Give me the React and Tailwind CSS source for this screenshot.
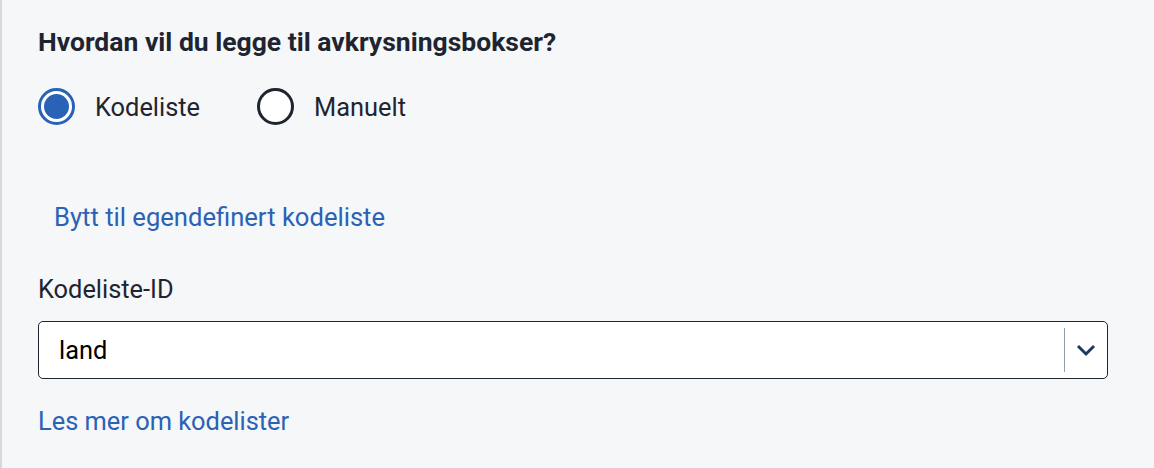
import { useState } from 'react'

function Radio({ checked, label, onClick }) {
  return (
    <label className="flex items-center gap-[20px] cursor-pointer" onClick={onClick}>
      {checked ? (
        <span className="w-[37px] h-[37px] rounded-full border-[3px] border-[#2a62b5] bg-white flex items-center justify-center">
          <span className="w-[25px] h-[25px] rounded-full bg-[#2a62b5]" />
        </span>
      ) : (
        <span className="w-[37px] h-[37px] rounded-full border-[3px] border-[#1e2530] bg-white" />
      )}
      <span className="text-[25.4px] leading-[32px] text-[#1e2530]">{label}</span>
    </label>
  )
}

export default function App() {
  const [mode, setMode] = useState('kodeliste')

  return (
    <div
      className="w-[1154px] h-[468px] bg-[#f6f7f9] border-l-2 border-[#d6d8dc] pl-[36px] pr-[46px] pt-[26px]"
      style={{ fontFamily: 'Roboto, "Liberation Sans", sans-serif' }}
    >
      <h2 className="text-[26.5px] font-bold text-[#1e2530] leading-[32px]">
        Hvordan vil du legge til avkrysningsbokser?
      </h2>

      <div className="flex gap-[57px] mt-[30px]">
        <Radio checked={mode === 'kodeliste'} label="Kodeliste" onClick={() => setMode('kodeliste')} />
        <Radio checked={mode === 'manuelt'} label="Manuelt" onClick={() => setMode('manuelt')} />
      </div>

      <button className="block mt-[76px] ml-[16px] text-[25.6px] text-[#2a62b5] leading-[32px]">
        Bytt til egendefinert kodeliste
      </button>

      <label className="block mt-[40px] text-[25.4px] text-[#1e2530] leading-[32px]">Kodeliste-ID</label>

      <div className="mt-[16px] h-[58px] bg-white border border-[#1e2530] rounded-[5px] flex items-center">
        <span className="flex-1 pl-[20px] text-[25.4px] leading-[32px] text-black">land</span>
        <span className="w-px h-[44px] bg-[#8fa0b0]" />
        <span className="w-[42px] flex items-center justify-center">
          <svg width="22" height="14" viewBox="0 0 22 14" fill="none">
            <path d="M3 3l8 8 8-8" stroke="#1b3a5e" strokeWidth="3" />
          </svg>
        </span>
      </div>

      <a href="#" className="block mt-[26px] text-[25.4px] text-[#2a62b5] leading-[32px]">
        Les mer om kodelister
      </a>
    </div>
  )
}
